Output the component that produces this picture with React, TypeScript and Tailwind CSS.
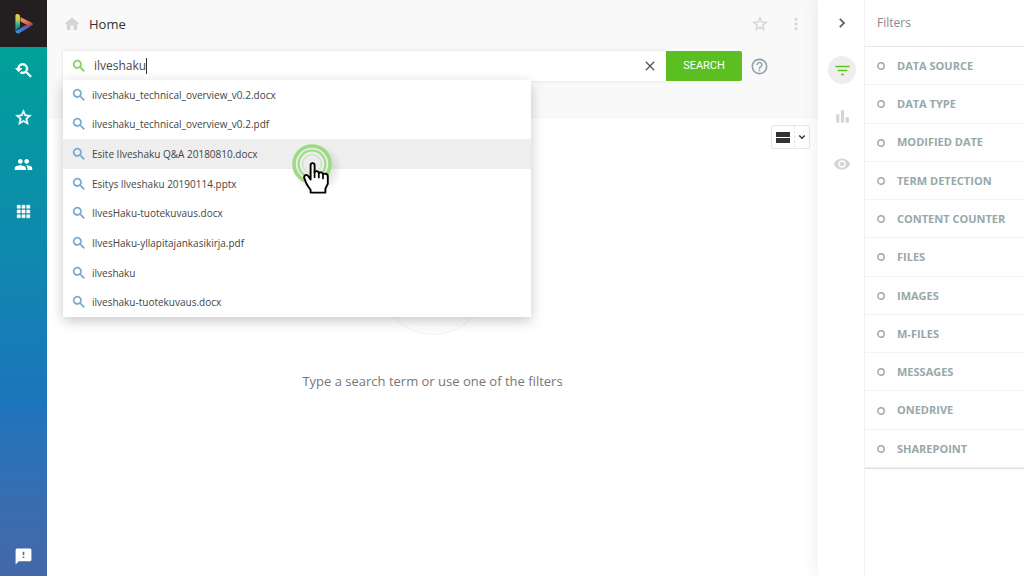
import React from "react";
import {
  MdApps,
  MdBarChart,
  MdChevronRight,
  MdClose,
  MdExpandMore,
  MdFilterList,
  MdHelpOutline,
  MdHome,
  MdMoreVert,
  MdPeople,
  MdSearch,
  MdSmsFailed,
  MdStarBorder,
  MdVisibility,
  MdYoutubeSearchedFor,
} from "react-icons/md";

const suggestions = [
  "ilveshaku_technical_overview_v0.2.docx",
  "ilveshaku_technical_overview_v0.2.pdf",
  "Esite Ilveshaku Q&A 20180810.docx",
  "Esitys Ilveshaku 20190114.pptx",
  "IlvesHaku-tuotekuvaus.docx",
  "IlvesHaku-yllapitajankasikirja.pdf",
  "ilveshaku",
  "ilveshaku-tuotekuvaus.docx",
];

const filters = [
  "DATA SOURCE",
  "DATA TYPE",
  "MODIFIED DATE",
  "TERM DETECTION",
  "CONTENT COUNTER",
  "FILES",
  "IMAGES",
  "M-FILES",
  "MESSAGES",
  "ONEDRIVE",
  "SHAREPOINT",
];

function Logo() {
  return (
    <svg width="20" height="22" viewBox="0 0 20 22" fill="none" aria-hidden="true">
      <defs>
        <linearGradient id="logo-left" x1="0" y1="0" x2="0" y2="1">
          <stop offset="0" stopColor="#f9c63d" />
          <stop offset="0.35" stopColor="#b9cf5a" />
          <stop offset="0.7" stopColor="#1ba38f" />
          <stop offset="1" stopColor="#1e8fb0" />
        </linearGradient>
        <linearGradient id="logo-top" x1="0" y1="0" x2="1" y2="1">
          <stop offset="0" stopColor="#f9b04d" />
          <stop offset="0.5" stopColor="#ee6a4a" />
          <stop offset="1" stopColor="#8a4560" />
        </linearGradient>
        <linearGradient id="logo-bottom" x1="0" y1="1" x2="1" y2="0">
          <stop offset="0" stopColor="#2f9be0" />
          <stop offset="0.5" stopColor="#4a6cc0" />
          <stop offset="1" stopColor="#7a4a96" />
        </linearGradient>
      </defs>
      <path d="M1.4 3C1.4 1 3.4 0.5 5 1.6L6 2.6V13.4L1.4 17.6Z" fill="url(#logo-left)" />
      <path d="M6.6 4.2L17.4 9.4C19.2 10.4 19.2 11.8 18 12.6L15 13L6.6 8.6Z" fill="url(#logo-top)" />
      <path d="M1.4 18L12.6 11.6L16.6 13.6L5 20.2C3.2 21 1.6 20 1.4 18Z" fill="url(#logo-bottom)" />
    </svg>
  );
}

function ListIcon() {
  return (
    <svg width="14" height="11" viewBox="0 0 14 11" fill="currentColor" aria-hidden="true">
      <rect width="14" height="5" />
      <rect y="6" width="14" height="5" />
    </svg>
  );
}

function Ring() {
  return (
    <svg width="8" height="8" viewBox="0 0 8 8" fill="none" aria-hidden="true">
      <circle cx="4" cy="4" r="3.2" stroke="currentColor" strokeWidth="1.4" />
    </svg>
  );
}

function Pointer() {
  return (
    <svg
      className="pointer-events-none absolute top-[140px] left-[288px] z-20"
      width="56"
      height="60"
      viewBox="0 0 56 60"
      fill="none"
      aria-hidden="true"
    >
      <defs>
        <radialGradient id="pointer-shade">
          <stop offset="0.6" stopColor="#000" stopOpacity="0.1" />
          <stop offset="1" stopColor="#000" stopOpacity="0" />
        </radialGradient>
      </defs>
      <circle cx="29" cy="29" r="25" fill="url(#pointer-shade)" />
      <circle cx="24" cy="24" r="19" fill="#ececec" />
      <circle cx="24" cy="24" r="18" stroke="#9ddb82" strokeWidth="3.6" />
      <circle cx="24" cy="24" r="13.4" stroke="#9ddb82" strokeWidth="2" />
      <circle cx="24" cy="24" r="9.4" stroke="#bfe5ae" strokeWidth="1" />
      <path
        d="M22.6 36.6V25.4C22.6 22.4 26.6 22.4 26.6 25.4V32.4C27.4 30.4 30.8 30.8 30.8 33.4C31.6 31.6 35 32 35 34.6C36 33 39.8 33.4 39.8 36.4V43.8L37.4 48.6V52.6H22.6V50L18.6 44L16.2 37.8C15.8 34.8 19 34 20.4 36.2L22.6 39.6Z"
        fill="#fff"
        stroke="#000"
        strokeWidth="1.9"
        strokeLinejoin="round"
      />
      <path d="M26.6 31.6V37.2M30.8 33V37.6M35 34.4V38.4" stroke="#000" strokeWidth="1.7" strokeLinecap="round" />
    </svg>
  );
}

function Sidebar() {
  return (
    <nav
      aria-label="Main"
      className="flex w-[47px] shrink-0 flex-col items-center bg-linear-to-b from-[#00a693] via-[#1c75bc] via-70% to-[#4568a8] text-white"
    >
      <a href="#start" aria-label="Start" className="flex h-[47px] w-full items-center justify-center bg-[#231f20]">
        <Logo />
      </a>
      <button aria-label="Search history" className="flex h-[47px] w-full items-center justify-center pb-px">
        <MdYoutubeSearchedFor size={19} strokeWidth={1} />
      </button>
      <button aria-label="Favourites" className="flex h-[47px] w-full items-center justify-center pb-px">
        <MdStarBorder size={19} strokeWidth={0.6} />
      </button>
      <button aria-label="People" className="flex h-[47px] w-full items-center justify-center pb-px">
        <MdPeople size={19} />
      </button>
      <button aria-label="Apps" className="flex h-[47px] w-full items-center justify-center pb-px">
        <MdApps size={19} strokeWidth={0.6} />
      </button>
      <button aria-label="Feedback" className="mt-auto flex h-[39px] w-full items-center justify-center">
        <MdSmsFailed size={19} />
      </button>
    </nav>
  );
}

function SearchForm() {
  return (
    <form className="relative flex h-[30px] items-center" onSubmit={(e) => e.preventDefault()}>
      <div className="flex h-full min-w-0 flex-1 items-center bg-white shadow-[0_0_3px_rgba(0,0,0,0.12)]">
        <label htmlFor="query" className="pr-[7px] pl-2 text-[#7ed057]" aria-label="Search">
          <MdSearch size={16} strokeWidth={0.7} />
        </label>
        <input
          id="query"
          type="text"
          defaultValue="ilveshaku"
          autoComplete="off"
          className="field-sizing-content text-xs leading-5 text-[#484848] outline-none"
        />
        <span className="h-4 w-px bg-[#333333]" />
        <button type="button" aria-label="Clear" className="mr-2 ml-auto text-[#55595b]">
          <MdClose size={16} />
        </button>
      </div>
      <button
        type="submit"
        className="h-full w-[76px] rounded-r-xs bg-[#5bbf21] font-[Roboto,sans-serif] text-[11px] text-white"
      >
        SEARCH
      </button>
      <button type="button" aria-label="Help" className="ml-2 text-[#90a4a8]">
        <MdHelpOutline size={19} />
      </button>
      <ul className="absolute top-[29px] left-0 z-10 grid h-[237px] w-[468px] auto-rows-fr bg-white shadow-[0_4px_12px_rgba(0,0,0,0.22)]">
        {suggestions.map((text, i) => (
          <li key={text} className={i === 2 ? "bg-[#eeeeee]" : ""}>
            <button type="button" className="flex h-full w-full items-center gap-[5px] pl-2 text-[#444444]">
              <MdSearch size={16} strokeWidth={0.5} className="text-[#6fa3cc]" />
              <span className="text-[10px] leading-4">{text}</span>
            </button>
          </li>
        ))}
      </ul>
    </form>
  );
}

export default function App() {
  return (
    <div className="relative flex min-h-screen bg-white font-['Open_Sans','Noto_Sans',sans-serif] [&_path[fill=none]]:stroke-none">
      <Sidebar />
      <main className="flex min-w-0 flex-1 flex-col">
        <header className="flex h-[118px] flex-col border-b border-[#f2f2f2] bg-[#f9f9f9] pl-4">
          <div className="flex h-[47px] items-center pr-[13px]">
            <MdHome size={18} className="text-[#d3d6d8]" />
            <h1 className="ml-2 text-[13px] leading-5 text-[#333333]">Home</h1>
            <button aria-label="Add to favourites" className="ml-auto text-[#d3d6d8]">
              <MdStarBorder size={18} strokeWidth={0.5} />
            </button>
            <button aria-label="More" className="ml-[18px] text-[#d3d6d8]">
              <MdMoreVert size={18} />
            </button>
          </div>
          <div className="pt-1 pr-[49px]">
            <SearchForm />
          </div>
        </header>
        <div className="flex justify-end pt-[7px] pr-2">
          <div className="flex h-6 rounded-xs border border-[#e6e6e6] bg-white text-[#333333]">
            <button aria-label="List view" className="flex w-[23px] items-center justify-center border-r border-dashed border-[#e6e6e6]">
              <ListIcon />
            </button>
            <button aria-label="View options" className="flex w-3.5 items-center justify-center">
              <MdExpandMore size={12} strokeWidth={1} />
            </button>
          </div>
        </div>
        <section className="mt-[78px] flex flex-col items-center">
          <div className="size-[108px] rounded-full border border-[#f3f3f3] bg-[#fefefe]" />
          <p className="mt-9 text-[13px] leading-5 text-[#777777]">Type a search term or use one of the filters</p>
        </section>
      </main>
      <div className="flex w-[46px] shrink-0 flex-col items-center bg-white pl-0.5 text-[#d3d6d8] shadow-[-3px_0_14px_rgba(0,0,0,0.06)]">
        <button aria-label="Collapse panel" className="flex h-[46px] items-center text-[#666666]">
          <MdChevronRight size={18} strokeWidth={0.7} />
        </button>
        <button aria-label="Filters" className="mt-[10px] flex size-7 items-center justify-center rounded-full bg-[#eeeeee] text-[#5bc71e]">
          <MdFilterList size={19} />
        </button>
        <button aria-label="Statistics" className="mt-[9px] flex h-[47px] items-center">
          <MdBarChart size={19} />
        </button>
        <button aria-label="Preview" className="flex h-[47px] items-center">
          <MdVisibility size={18} />
        </button>
      </div>
      <aside className="w-[160px] shrink-0 border-l border-[#f2f2f2] bg-[#fefefe]">
        <h2 className="flex h-[47px] items-center border-b border-[#e6e6e6] pl-3 text-xs text-[#888888]">Filters</h2>
        <ul className="grid h-[422px] auto-rows-fr border-b border-[#dddddd]">
          {filters.map((name) => (
            <li key={name} className="border-b border-[#f2f2f2]">
              <button className="flex h-full w-full items-center gap-3 pt-px pl-3 text-[11px] font-bold text-[#97a8aa]">
                <Ring />
                {name}
              </button>
            </li>
          ))}
        </ul>
      </aside>
      <Pointer />
    </div>
  );
}
